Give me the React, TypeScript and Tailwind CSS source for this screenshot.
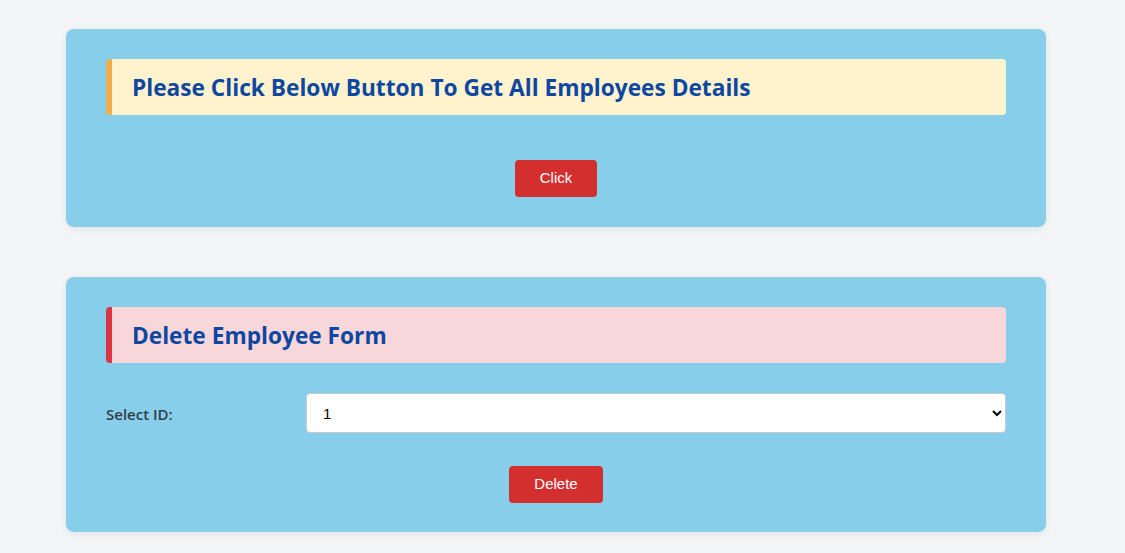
export default function App() {
  return (
    <div className="min-h-[553px] bg-[#f4f5f7] pt-[29px] pb-[21px] font-['Open_Sans',sans-serif]">
      <div className="ml-[66px] flex w-[980px] flex-col gap-[50px]">
        <section className="rounded-lg bg-[#87ceeb] px-10 pt-[30px] pb-[30px] shadow-[0_2px_8px_rgba(0,0,0,0.08)]">
          <div className="flex h-[56px] items-center rounded border-l-[6px] border-[#f0ad4e] bg-[#fff3cd] pt-[3px] pl-5">
            <h2 className="text-[22.7px] font-bold text-[#0d47a1]">
              Please Click Below Button To Get All Employees Details
            </h2>
          </div>
          <div className="mt-[45px] flex justify-center">
            <button className="h-[37px] rounded bg-[#d32f2f] px-[25px] font-['Liberation_Sans',sans-serif] text-[15px] text-white">
              Click
            </button>
          </div>
        </section>

        <section className="rounded-lg bg-[#87ceeb] px-10 pt-[30px] pb-[29px] shadow-[0_2px_8px_rgba(0,0,0,0.08)]">
          <div className="flex h-[56px] items-center rounded border-l-[6px] border-[#dc3545] bg-[#f8d7da] pt-[3px] pl-5">
            <h2 className="text-[22.7px] font-bold text-[#0d47a1]">Delete Employee Form</h2>
          </div>
          <div className="mt-[30px] flex items-center">
            <label className="w-[200px] pt-[2px] text-[15px] font-semibold text-[#333d47]">Select ID:</label>
            <select className="h-[40px] flex-1 rounded border border-[#ccc] bg-white px-3 font-['Liberation_Sans',sans-serif] text-[15px] text-black">
              <option>1</option>
            </select>
          </div>
          <div className="mt-[33px] flex justify-center">
            <button className="h-[37px] rounded bg-[#d32f2f] px-[25px] font-['Liberation_Sans',sans-serif] text-[15px] text-white">
              Delete
            </button>
          </div>
        </section>
      </div>
    </div>
  );
}
